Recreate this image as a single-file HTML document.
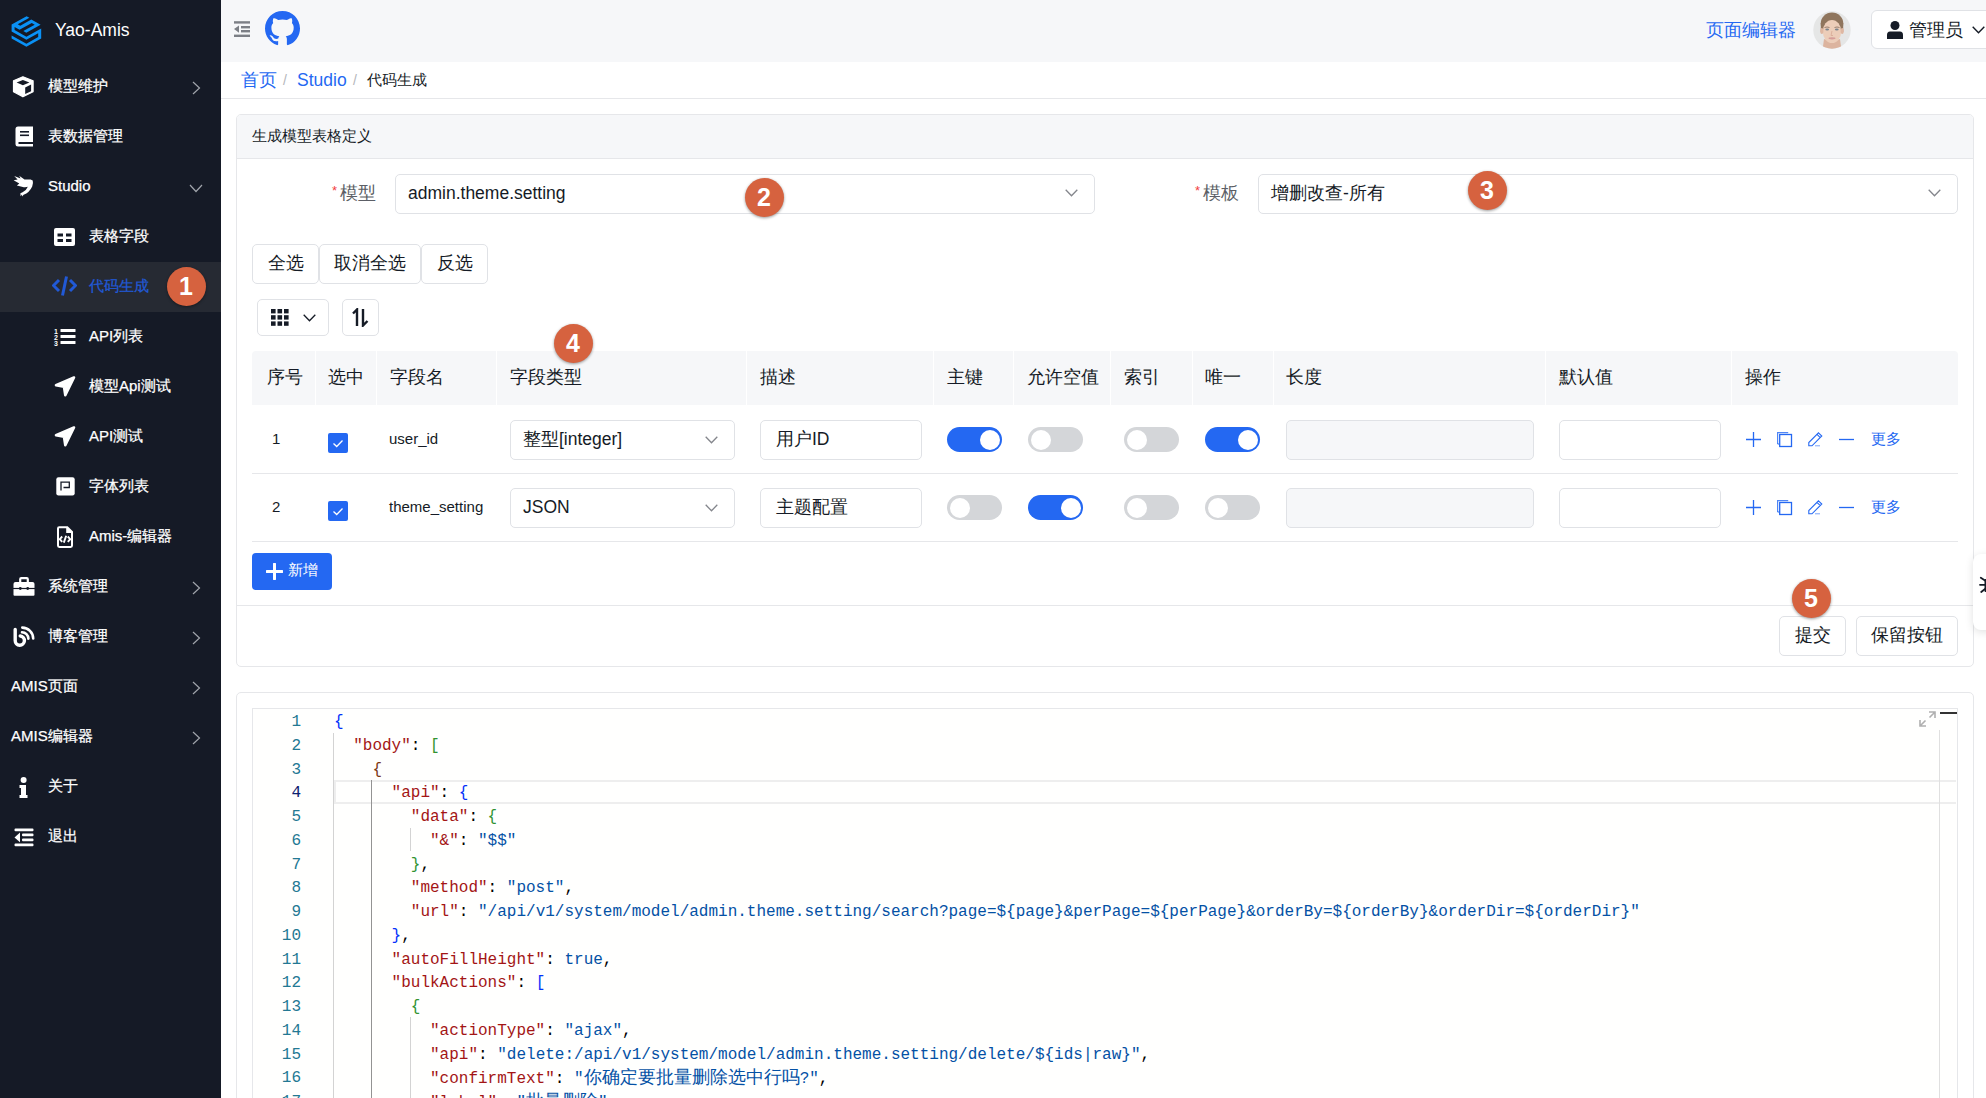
<!DOCTYPE html><html><head><meta charset="utf-8"><style>
*{box-sizing:border-box;margin:0;padding:0}
html,body{width:1986px;height:1098px;overflow:hidden;background:#fff;font-family:"Liberation Sans",sans-serif;color:#151b26}
.a{position:absolute;white-space:nowrap}
svg{display:block}
#side{position:absolute;left:0;top:0;width:221px;height:1098px;background:#151a26}
.mt{position:absolute;color:#fff;font-size:15px;line-height:20px;white-space:nowrap;-webkit-text-stroke:0.25px currentColor}
.panel{position:absolute;border:1px solid #e6e7ea;border-radius:5px;background:#fff}
.btn{position:absolute;border:1px solid #e0e2e6;border-radius:5px;background:#fff;font-size:17.5px;line-height:37px;color:#151b26;text-align:center;white-space:nowrap}
.badge{position:absolute;width:40px;height:40px;border-radius:50%;background:#d6623f;color:#fff;font-weight:bold;font-size:25px;text-align:center;line-height:40px;box-shadow:0 1px 3px rgba(0,0,0,.4)}
.th{position:absolute;font-size:17.5px;line-height:22px;color:#151b26;white-space:nowrap}
.inp{position:absolute;border:1px solid #e0e2e6;border-radius:5px;background:#fff;font-size:17.5px;line-height:22px;white-space:nowrap}
.sw{position:absolute;width:55px;height:25px;border-radius:13px;background:#d4d6d9}
.sw::after{content:"";position:absolute;top:2.5px;left:2.5px;width:20px;height:20px;border-radius:50%;background:#fff}
.sw.on{background:#2468f2}
.sw.on::after{left:32.5px}
.cb{position:absolute;width:20px;height:20px;border-radius:2px;background:#2468f2}
.ln{position:absolute;left:253px;width:48px;text-align:right;font-family:"Liberation Mono",monospace;font-size:16px;color:#237893;line-height:23.73px;height:23.73px}
.cl{position:absolute;left:334px;line-height:23.73px;height:23.73px;font-family:"Liberation Mono",monospace;font-size:16px;white-space:pre;color:#000}
.k{color:#a31515}.s{color:#0451a5}.b1{color:#0431fa}.b2{color:#319331}.b3{color:#7b3814}
.ig{position:absolute;width:1px;background:#d3d3d3}
</style></head><body>
<div id="side">
<svg class="a" style="left:0;top:0" width="50" height="50" viewBox="0 0 50 50"><path d="M26.60 16.15 L29.37 17.70 L17.71 24.23 L20.26 25.65 L31.31 19.46 L40.60 24.66 L26.27 32.68 L23.32 31.03 L34.71 24.66 L31.76 23.01 L19.53 29.86 L14.60 27.10 L14.60 30.09 L26.40 36.70 L41.20 28.41 L41.20 38.51 L26.40 46.80 L11.60 38.51 L11.60 35.41 L26.40 43.70 L38.20 37.09 L38.20 33.19 L26.40 39.80 L11.60 31.51 L11.60 24.55Z" fill="#0a91f5"/></svg>
<div class="a" style="left:55px;top:17px;font-size:17.5px;line-height:26px;color:#fff">Yao-Amis</div>
<div class="mt" style="left:48px;top:75.5px;color:#fff">模型维护</div>
<div class="a" style="left:0;top:85.5px;width:0;height:0"><svg class="a" style="left:12px;top:-11px" width="23" height="24" viewBox="0 0 23 24"><path d="M10.9 1.8 L21.1 5.7 V16.8 L10.9 21.8 L1.5 16.8 V5.7 Z" fill="#fff" stroke="#fff" stroke-width="1.2" stroke-linejoin="round"/><path d="M4.6 7.6 L10.9 5.1 L17.4 7.6 L10.9 10.2 Z" fill="#151a26"/><path d="M13.2 12.4 L19.1 9.6 V16.2 L13.2 19 Z" fill="#151a26"/></svg></div>
<svg class="a" style="left:192px;top:81px" width="9" height="14" viewBox="0 0 9 14"><path d="M1 1 L7.5 7 L1 13" fill="none" stroke="#a0a4ab" stroke-width="1.2"/></svg>
<div class="mt" style="left:48px;top:125.5px;color:#fff">表数据管理</div>
<div class="a" style="left:0;top:135.5px;width:0;height:0"><svg class="a" style="left:15px;top:-10px" width="19" height="21" viewBox="0 0 19 21"><path d="M3 0.5 H18 V20.5 H3 Q0.5 20.5 0.5 18 V3 Q0.5 0.5 3 0.5Z" fill="#fff"/><rect x="5" y="5" width="9" height="1.6" fill="#151a26"/><rect x="5" y="8.5" width="9" height="1.6" fill="#151a26"/><rect x="3.5" y="16" width="14.5" height="2" fill="#151a26"/></svg></div>
<div class="mt" style="left:48px;top:175.5px;color:#fff">Studio</div>
<div class="a" style="left:0;top:185.5px;width:0;height:0"><svg class="a" style="left:10px;top:-14.5px" width="25" height="28" viewBox="10 171 25 28"><path d="M30.6 179.6 Q27 179.3 24.5 179.6 L19.2 175.8 L20.6 178.6 L14.2 175.9 L17.6 179.4 L13.6 180.3 L19.3 183.6 L16.9 185.6 L23.8 187.2 Q26.5 187.4 27.8 186.8 Q26.6 190.2 22.6 192.3 L20.4 193.2 L20.6 196.3 L22 194.6 L22.2 196.6 L23.6 194.8 Q29.5 192.5 32.2 186.5 Q33.5 183 32.7 180.6 Z" fill="#fff"/></svg></div>
<svg class="a" style="left:189px;top:184px" width="14" height="9" viewBox="0 0 14 9"><path d="M1 1 L7 7.5 L13 1" fill="none" stroke="#a0a4ab" stroke-width="1.2"/></svg>
<div class="mt" style="left:89px;top:225.5px;color:#fff">表格字段</div>
<div class="a" style="left:0;top:235.5px;width:0;height:0"><svg class="a" style="left:54px;top:-8px" width="21" height="18" viewBox="0 0 21 18"><rect x="0" y="0" width="21" height="18" rx="2" fill="#fff"/><rect x="3.5" y="5.5" width="5.5" height="3" fill="#151a26"/><rect x="12" y="5.5" width="5.5" height="3" fill="#151a26"/><rect x="3.5" y="11" width="5.5" height="3" fill="#151a26"/><rect x="12" y="11" width="5.5" height="3" fill="#151a26"/></svg></div>
<div class="a" style="left:0;top:262px;width:221px;height:50px;background:#262a33"></div>
<div class="mt" style="left:89px;top:275.5px;color:#2159d6">代码生成</div>
<div class="a" style="left:0;top:285.5px;width:0;height:0"><svg class="a" style="left:52px;top:-10px" width="25" height="20" viewBox="0 0 25 20"><path d="M7 4 L1.5 9.5 L7 15" fill="none" stroke="#2159d6" stroke-width="3"/><path d="M18 4 L23.5 9.5 L18 15" fill="none" stroke="#2159d6" stroke-width="3"/><path d="M14.5 0.5 L10.5 19.5" fill="none" stroke="#2159d6" stroke-width="3"/></svg></div>
<div class="mt" style="left:89px;top:325.5px;color:#fff">API列表</div>
<div class="a" style="left:0;top:335.5px;width:0;height:0"><svg class="a" style="left:53px;top:-9px" width="23" height="20" viewBox="0 0 23 20"><rect x="7.5" y="2" width="15" height="3" rx="0.5" fill="#fff"/><rect x="7.5" y="8" width="15" height="3" rx="0.5" fill="#fff"/><rect x="7.5" y="14" width="15" height="3" rx="0.5" fill="#fff"/><text x="1" y="6.5" font-size="7" font-weight="bold" fill="#fff" font-family="Liberation Sans">1</text><text x="1" y="12.5" font-size="7" font-weight="bold" fill="#fff" font-family="Liberation Sans">2</text><text x="1" y="18.5" font-size="7" font-weight="bold" fill="#fff" font-family="Liberation Sans">3</text></svg></div>
<div class="mt" style="left:89px;top:375.5px;color:#fff">模型Api测试</div>
<div class="a" style="left:0;top:385.5px;width:0;height:0"><svg class="a" style="left:54px;top:-10px" width="22" height="21" viewBox="0 0 22 21"><path d="M20 1.5 L2 9.3 L10 10.8 L11.3 19.3 Z" fill="#fff" stroke="#fff" stroke-width="2.6" stroke-linejoin="round"/></svg></div>
<div class="mt" style="left:89px;top:425.5px;color:#fff">API测试</div>
<div class="a" style="left:0;top:435.5px;width:0;height:0"><svg class="a" style="left:54px;top:-10px" width="22" height="21" viewBox="0 0 22 21"><path d="M20 1.5 L2 9.3 L10 10.8 L11.3 19.3 Z" fill="#fff" stroke="#fff" stroke-width="2.6" stroke-linejoin="round"/></svg></div>
<div class="mt" style="left:89px;top:475.5px;color:#fff">字体列表</div>
<div class="a" style="left:0;top:485.5px;width:0;height:0"><svg class="a" style="left:55.5px;top:-8.5px" width="19" height="19" viewBox="0 0 19 19"><rect x="0.3" y="0.3" width="18.4" height="18.2" rx="2.2" fill="#fff"/><path d="M5 13.5 V5.2 H13.3 V10.5 H7.5" fill="none" stroke="#151a26" stroke-width="1.3"/></svg></div>
<div class="mt" style="left:89px;top:525.5px;color:#fff">Amis-编辑器</div>
<div class="a" style="left:0;top:535.5px;width:0;height:0"><svg class="a" style="left:57px;top:-10px" width="16" height="22" viewBox="0 0 16 22"><path d="M2.2 1.2 H10.3 L15 5.9 V19.6 Q15 20.9 13.7 20.9 H2.3 Q1 20.9 1 19.6 V2.5 Q1 1.2 2.2 1.2Z" fill="none" stroke="#fff" stroke-width="2"/><path d="M10 1 V6.3 H15.2" fill="#fff" stroke="#fff" stroke-width="1.6"/><path d="M5.2 10.5 L2.8 13.2 L5.2 15.9 M10.8 10.5 L13.2 13.2 L10.8 15.9 M9.2 9.8 L6.8 16.6" fill="none" stroke="#fff" stroke-width="1.9"/></svg></div>
<div class="mt" style="left:48px;top:575.5px;color:#fff">系统管理</div>
<div class="a" style="left:0;top:585.5px;width:0;height:0"><svg class="a" style="left:13px;top:-9px" width="22" height="20" viewBox="0 0 22 20"><path d="M7.2 6 V2.3 Q7.2 1.2 8.3 1.2 H13.7 Q14.8 1.2 14.8 2.3 V6" fill="none" stroke="#fff" stroke-width="2.2"/><path d="M2.5 5 H19.5 Q21.5 5 21.5 7 V17.8 Q21.5 18.8 20.5 18.8 H1.5 Q0.5 18.8 0.5 17.8 V7 Q0.5 5 2.5 5Z" fill="#fff"/><rect x="0" y="10.9" width="22" height="1.2" fill="#151a26"/><circle cx="7.3" cy="11.5" r="1.4" fill="#151a26"/><circle cx="14.7" cy="11.5" r="1.4" fill="#151a26"/></svg></div>
<svg class="a" style="left:192px;top:581px" width="9" height="14" viewBox="0 0 9 14"><path d="M1 1 L7.5 7 L1 13" fill="none" stroke="#a0a4ab" stroke-width="1.2"/></svg>
<div class="mt" style="left:48px;top:625.5px;color:#fff">博客管理</div>
<div class="a" style="left:0;top:635.5px;width:0;height:0"><svg class="a" style="left:13px;top:-10px" width="22" height="22" viewBox="0 0 22 22"><path d="M2.2 3.5 V14.5 A4.6 4.6 0 1 0 7.2 10" fill="none" stroke="#fff" stroke-width="3.4" stroke-linecap="round"/><path d="M9.3 1.6 A11 11 0 0 1 20.2 12.5" fill="none" stroke="#fff" stroke-width="2.6" stroke-linecap="round"/><path d="M9 6.2 A6.6 6.6 0 0 1 15.4 12.6" fill="none" stroke="#fff" stroke-width="2.6" stroke-linecap="round"/></svg></div>
<svg class="a" style="left:192px;top:631px" width="9" height="14" viewBox="0 0 9 14"><path d="M1 1 L7.5 7 L1 13" fill="none" stroke="#a0a4ab" stroke-width="1.2"/></svg>
<div class="mt" style="left:11px;top:675.5px;color:#fff">AMIS页面</div>
<svg class="a" style="left:192px;top:681px" width="9" height="14" viewBox="0 0 9 14"><path d="M1 1 L7.5 7 L1 13" fill="none" stroke="#a0a4ab" stroke-width="1.2"/></svg>
<div class="mt" style="left:11px;top:725.5px;color:#fff">AMIS编辑器</div>
<svg class="a" style="left:192px;top:731px" width="9" height="14" viewBox="0 0 9 14"><path d="M1 1 L7.5 7 L1 13" fill="none" stroke="#a0a4ab" stroke-width="1.2"/></svg>
<div class="mt" style="left:48px;top:775.5px;color:#fff">关于</div>
<div class="a" style="left:0;top:785.5px;width:0;height:0"><svg class="a" style="left:19px;top:-9px" width="10" height="22" viewBox="0 0 10 22"><circle cx="4.6" cy="3" r="3" fill="#fff"/><path d="M0.5 8 H7 V18 H8.5 V21 H0.5 V18 H2 V11 H0.5Z" fill="#fff"/></svg></div>
<div class="mt" style="left:48px;top:825.5px;color:#fff">退出</div>
<div class="a" style="left:0;top:835.5px;width:0;height:0"><svg class="a" style="left:14px;top:-8px" width="20" height="19" viewBox="0 0 20 19"><rect x="0.5" y="0.5" width="19" height="2.8" rx="1" fill="#fff"/><rect x="8" y="5.5" width="11.5" height="2.8" rx="1" fill="#fff"/><rect x="8" y="10.5" width="11.5" height="2.8" rx="1" fill="#fff"/><rect x="0.5" y="15.5" width="19" height="2.8" rx="1" fill="#fff"/><path d="M6 4.5 L0.5 9.4 L6 14.3Z" fill="#fff"/></svg></div>
</div>
<div class="a" style="left:221px;top:0;width:1765px;height:62px;background:#f6f7f9"></div>
<svg class="a" style="left:234px;top:21px" width="16" height="16" viewBox="0 0 16 16"><rect x="0" y="0.2" width="16" height="2.4" fill="#7c7f86"/><rect x="7" y="5" width="9" height="2.4" fill="#7c7f86"/><rect x="7" y="9" width="9" height="2.4" fill="#7c7f86"/><rect x="0" y="13.6" width="16" height="2.4" fill="#7c7f86"/><path d="M5 4.5 L0 8.1 L5 11.7Z" fill="#7c7f86"/></svg>
<svg class="a" style="left:265px;top:11px" width="35" height="35" viewBox="0 0 16 16"><path fill="#2468f2" d="M8 0C3.58 0 0 3.58 0 8c0 3.54 2.29 6.53 5.47 7.59.4.07.55-.17.55-.38 0-.19-.01-.82-.01-1.490-2.01.37-2.53-.49-2.69-.94-.09-.23-.48-.94-.82-1.13-.28-.15-.68-.52-.01-.53.63-.01 1.08.58 1.23.82.72 1.21 1.87.87 2.33.66.07-.52.28-.87.51-1.07-1.78-.2-3.64-.89-3.64-3.95 0-.87.31-1.59.82-2.150-.08-.2-.36-1.02.08-2.12 0 0 .67-.21 2.2.82.64-.18 1.32-.27 2-.27.68 0 1.36.09 2 .27 1.53-1.04 2.2-.82 2.2-.82.44 1.1.16 1.92.08 2.12.51.56.82 1.27.82 2.15 0 3.07-1.87 3.75-3.65 3.95.29.25.54.73.54 1.48 0 1.07-.01 1.93-.01 2.2 0 .21.15.46.55.38A8.013 8.013 0 0016 8c0-4.42-3.58-8-8-8z"/></svg>
<div class="a" style="left:1706px;top:18px;font-size:17.5px;line-height:24px;color:#2468f2">页面编辑器</div>
<svg class="a" style="left:1813px;top:11px" width="38" height="38" viewBox="0 0 38 38">
<defs><clipPath id="av"><circle cx="19" cy="19" r="18.7"/></clipPath>
<filter id="bl" x="-20%" y="-20%" width="140%" height="140%"><feGaussianBlur stdDeviation="0.7"/></filter></defs>
<g clip-path="url(#av)"><rect width="38" height="38" fill="#e5e6e6"/>
<g filter="url(#bl)">
<path d="M9.5 39 L11 28 Q19 31 27 28 L28.5 39 Z" fill="#dcb49f"/>
<ellipse cx="19" cy="12.5" rx="11.3" ry="11" fill="#8f745d"/>
<rect x="7.8" y="12" width="3.5" height="9" fill="#8f745d"/>
<rect x="26.7" y="12" width="3.5" height="9" fill="#8f745d"/>
<ellipse cx="19" cy="20.5" rx="9.2" ry="11.5" fill="#eccdb9"/>
<ellipse cx="8.8" cy="20" rx="1.6" ry="3" fill="#dfb7a2"/>
<ellipse cx="29.2" cy="20" rx="1.6" ry="3" fill="#dfb7a2"/>
<path d="M11.5 16.5 Q14 15.5 16.5 16.5 M21.5 16.5 Q24 15.5 26.5 16.5" stroke="#9a8070" stroke-width="1" fill="none"/>
<ellipse cx="14.2" cy="18.5" rx="1.9" ry="0.9" fill="#7a848d"/>
<ellipse cx="23.8" cy="18.5" rx="1.9" ry="0.9" fill="#7a848d"/>
<ellipse cx="19" cy="27.3" rx="3.5" ry="1.1" fill="#d59d98"/>
<path d="M19 20 L18 24.5 H20" stroke="#d9ad98" stroke-width="0.9" fill="none"/>
</g></g></svg>
<div class="a" style="left:1871px;top:10px;width:140px;height:39px;background:#fff;border:1px solid #e0e2e6;border-radius:6px"></div>
<svg class="a" style="left:1887px;top:21px" width="16" height="18" viewBox="0 0 16 18"><circle cx="8" cy="4.5" r="4.5" fill="#151b26"/><path d="M3 10.5 H13 Q16 10.5 16 14 V18 H0 V14 Q0 10.5 3 10.5Z" fill="#151b26"/></svg>
<div class="a" style="left:1909px;top:18px;font-size:17.5px;line-height:24px;color:#151b26">管理员</div>
<svg class="a" style="left:1972px;top:26px" width="13" height="8" viewBox="0 0 13 8"><path d="M0.7 0.7 L6.5 6.8 L12.3 0.7" fill="none" stroke="#151b26" stroke-width="1.4"/></svg>
<div class="a" style="left:221px;top:98px;width:1765px;height:1px;background:#e6e7ea"></div>
<div class="a" style="left:241px;top:68px;font-size:17.5px;line-height:24px;color:#2468f2">首页</div>
<div class="a" style="left:283px;top:70px;font-size:14px;line-height:20px;color:#b4b6ba">/</div>
<div class="a" style="left:297px;top:68px;font-size:17.5px;line-height:24px;color:#2468f2">Studio</div>
<div class="a" style="left:353px;top:70px;font-size:14px;line-height:20px;color:#b4b6ba">/</div>
<div class="a" style="left:367px;top:70px;font-size:15px;line-height:20px;color:#151b26">代码生成</div>
<div class="panel" style="left:236px;top:114px;width:1738px;height:553px;overflow:hidden"><div class="a" style="left:0;top:0;width:1736px;height:44px;background:#f6f7f9;border-bottom:1px solid #e6e7ea"></div></div>
<div class="a" style="left:252px;top:125px;font-size:15px;line-height:22px;color:#151b26">生成模型表格定义</div>
<div class="a" style="left:332px;top:183px;font-size:13px;line-height:16px;color:#f23d3d">*</div>
<div class="a" style="left:340px;top:181px;font-size:17.5px;line-height:24px;color:#5c5f66">模型</div>
<div class="inp" style="left:395px;top:174px;width:700px;height:40px"></div>
<div class="a" style="left:408px;top:181px;font-size:17.5px;line-height:24px;color:#151b26">admin.theme.setting</div>
<svg class="a" style="left:1065px;top:189px" width="13" height="8" viewBox="0 0 13 8"><path d="M0.7 0.7 L6.5 6.8 L12.3 0.7" fill="none" stroke="#84868c" stroke-width="1.3"/></svg>
<div class="a" style="left:1195px;top:183px;font-size:13px;line-height:16px;color:#f23d3d">*</div>
<div class="a" style="left:1203px;top:181px;font-size:17.5px;line-height:24px;color:#5c5f66">模板</div>
<div class="inp" style="left:1258px;top:174px;width:700px;height:40px"></div>
<div class="a" style="left:1271px;top:181px;font-size:17.5px;line-height:24px;color:#151b26">增删改查-所有</div>
<svg class="a" style="left:1928px;top:189px" width="13" height="8" viewBox="0 0 13 8"><path d="M0.7 0.7 L6.5 6.8 L12.3 0.7" fill="none" stroke="#84868c" stroke-width="1.3"/></svg>
<div class="btn" style="left:252px;top:244px;width:67px;height:40px">全选</div>
<div class="btn" style="left:319px;top:244px;width:102px;height:40px">取消全选</div>
<div class="btn" style="left:421px;top:244px;width:67px;height:40px">反选</div>
<div class="btn" style="left:257px;top:299px;width:72px;height:37px"></div>
<svg class="a" style="left:271px;top:309px" width="18" height="17" viewBox="0 0 18 17"><rect x="0.0" y="0.0" width="4.6" height="4.4" fill="#151b26"/><rect x="6.5" y="0.0" width="4.6" height="4.4" fill="#151b26"/><rect x="13.0" y="0.0" width="4.6" height="4.4" fill="#151b26"/><rect x="0.0" y="6.2" width="4.6" height="4.4" fill="#151b26"/><rect x="6.5" y="6.2" width="4.6" height="4.4" fill="#151b26"/><rect x="13.0" y="6.2" width="4.6" height="4.4" fill="#151b26"/><rect x="0.0" y="12.4" width="4.6" height="4.4" fill="#151b26"/><rect x="6.5" y="12.4" width="4.6" height="4.4" fill="#151b26"/><rect x="13.0" y="12.4" width="4.6" height="4.4" fill="#151b26"/></svg>
<svg class="a" style="left:303px;top:314px" width="13" height="8" viewBox="0 0 13 8"><path d="M0.7 0.7 L6.5 6.8 L12.3 0.7" fill="none" stroke="#151b26" stroke-width="1.3"/></svg>
<div class="btn" style="left:342px;top:299px;width:37px;height:37px"></div>
<svg class="a" style="left:352px;top:308px" width="17" height="19" viewBox="0 0 17 19"><path d="M5 18 V1.5 L1 5.5" fill="none" stroke="#151b26" stroke-width="2.4" stroke-linejoin="miter"/><path d="M11 1 V17.5 L15.5 13" fill="none" stroke="#151b26" stroke-width="2.4"/></svg>
<div class="a" style="left:252px;top:351px;width:1706px;height:54px;background:#f6f7f9;border-radius:4px 4px 0 0"></div>
<div class="a" style="left:315px;top:351px;width:1.3px;height:54px;background:#fff"></div>
<div class="a" style="left:376px;top:351px;width:1.3px;height:54px;background:#fff"></div>
<div class="a" style="left:496px;top:351px;width:1.3px;height:54px;background:#fff"></div>
<div class="a" style="left:746px;top:351px;width:1.3px;height:54px;background:#fff"></div>
<div class="a" style="left:933px;top:351px;width:1.3px;height:54px;background:#fff"></div>
<div class="a" style="left:1013px;top:351px;width:1.3px;height:54px;background:#fff"></div>
<div class="a" style="left:1110px;top:351px;width:1.3px;height:54px;background:#fff"></div>
<div class="a" style="left:1192px;top:351px;width:1.3px;height:54px;background:#fff"></div>
<div class="a" style="left:1273px;top:351px;width:1.3px;height:54px;background:#fff"></div>
<div class="a" style="left:1545px;top:351px;width:1.3px;height:54px;background:#fff"></div>
<div class="a" style="left:1731px;top:351px;width:1.3px;height:54px;background:#fff"></div>
<div class="th" style="left:267px;top:366px">序号</div>
<div class="th" style="left:328px;top:366px">选中</div>
<div class="th" style="left:390px;top:366px">字段名</div>
<div class="th" style="left:510px;top:366px">字段类型</div>
<div class="th" style="left:760px;top:366px">描述</div>
<div class="th" style="left:947px;top:366px">主键</div>
<div class="th" style="left:1027px;top:366px">允许空值</div>
<div class="th" style="left:1124px;top:366px">索引</div>
<div class="th" style="left:1205px;top:366px">唯一</div>
<div class="th" style="left:1286px;top:366px">长度</div>
<div class="th" style="left:1559px;top:366px">默认值</div>
<div class="th" style="left:1745px;top:366px">操作</div>
<div class="a" style="left:252px;top:473px;width:1706px;height:1px;background:#e6e7ea"></div>
<div class="a" style="left:272px;top:429px;font-size:15px;line-height:20px;color:#151b26">1</div>
<div class="cb" style="left:328px;top:433px"><svg width="20" height="20" viewBox="0 0 20 20"><path d="M5.5 10.5 L8.7 13.5 L14.5 7.5" fill="none" stroke="#fff" stroke-width="1.3"/></svg></div>
<div class="a" style="left:389px;top:429px;font-size:15px;line-height:20px;color:#151b26">user_id</div>
<div class="inp" style="left:510px;top:420px;width:225px;height:40px"></div>
<div class="a" style="left:523px;top:427px;font-size:17.5px;line-height:24px;color:#151b26">整型[integer]</div>
<svg class="a" style="left:705px;top:436px" width="13" height="8" viewBox="0 0 13 8"><path d="M0.7 0.7 L6.5 6.8 L12.3 0.7" fill="none" stroke="#84868c" stroke-width="1.3"/></svg>
<div class="inp" style="left:760px;top:420px;width:162px;height:40px"></div>
<div class="a" style="left:776px;top:427px;font-size:17.5px;line-height:24px;color:#151b26">用户ID</div>
<div class="sw on" style="left:947px;top:427px"></div>
<div class="sw" style="left:1028px;top:427px"></div>
<div class="sw" style="left:1124px;top:427px"></div>
<div class="sw on" style="left:1205px;top:427px"></div>
<div class="inp" style="left:1286px;top:420px;width:248px;height:40px;background:#f6f7f9"></div>
<div class="inp" style="left:1559px;top:420px;width:162px;height:40px"></div>
<svg class="a" style="left:1745px;top:431px" width="17" height="17" viewBox="0 0 17 17"><path d="M8.5 1 V16 M1 8.5 H16" stroke="#2468f2" stroke-width="1.3"/></svg>
<svg class="a" style="left:1776px;top:431px" width="17" height="17" viewBox="0 0 17 17"><path d="M1.6 13 V1.6 H12.2" fill="none" stroke="#2468f2" stroke-width="1.2" opacity=".8"/><path d="M1.6 13 H3" stroke="#2468f2" stroke-width="1.2"/><rect x="3.7" y="3.5" width="11.8" height="12" fill="none" stroke="#2468f2" stroke-width="1.3"/></svg>
<svg class="a" style="left:1807px;top:431px" width="17" height="17" viewBox="0 0 17 17"><path d="M11.5 1.8 L14.8 5 L5 14.8 H1.8 V11.5 Z M10 3.3 L13.3 6.6" fill="none" stroke="#2468f2" stroke-width="1.1"/><path d="M8 14.8 H13" stroke="#2468f2" stroke-width="1" opacity=".6"/></svg>
<svg class="a" style="left:1838px;top:431px" width="17" height="17" viewBox="0 0 17 17"><path d="M1 8.5 H16" stroke="#2468f2" stroke-width="1.3"/></svg>
<div class="a" style="left:1871px;top:429px;font-size:15px;line-height:20px;color:#2468f2">更多</div>
<div class="a" style="left:252px;top:541px;width:1706px;height:1px;background:#e6e7ea"></div>
<div class="a" style="left:272px;top:497px;font-size:15px;line-height:20px;color:#151b26">2</div>
<div class="cb" style="left:328px;top:501px"><svg width="20" height="20" viewBox="0 0 20 20"><path d="M5.5 10.5 L8.7 13.5 L14.5 7.5" fill="none" stroke="#fff" stroke-width="1.3"/></svg></div>
<div class="a" style="left:389px;top:497px;font-size:15px;line-height:20px;color:#151b26">theme_setting</div>
<div class="inp" style="left:510px;top:488px;width:225px;height:40px"></div>
<div class="a" style="left:523px;top:495px;font-size:17.5px;line-height:24px;color:#151b26">JSON</div>
<svg class="a" style="left:705px;top:504px" width="13" height="8" viewBox="0 0 13 8"><path d="M0.7 0.7 L6.5 6.8 L12.3 0.7" fill="none" stroke="#84868c" stroke-width="1.3"/></svg>
<div class="inp" style="left:760px;top:488px;width:162px;height:40px"></div>
<div class="a" style="left:776px;top:495px;font-size:17.5px;line-height:24px;color:#151b26">主题配置</div>
<div class="sw" style="left:947px;top:495px"></div>
<div class="sw on" style="left:1028px;top:495px"></div>
<div class="sw" style="left:1124px;top:495px"></div>
<div class="sw" style="left:1205px;top:495px"></div>
<div class="inp" style="left:1286px;top:488px;width:248px;height:40px;background:#f6f7f9"></div>
<div class="inp" style="left:1559px;top:488px;width:162px;height:40px"></div>
<svg class="a" style="left:1745px;top:499px" width="17" height="17" viewBox="0 0 17 17"><path d="M8.5 1 V16 M1 8.5 H16" stroke="#2468f2" stroke-width="1.3"/></svg>
<svg class="a" style="left:1776px;top:499px" width="17" height="17" viewBox="0 0 17 17"><path d="M1.6 13 V1.6 H12.2" fill="none" stroke="#2468f2" stroke-width="1.2" opacity=".8"/><path d="M1.6 13 H3" stroke="#2468f2" stroke-width="1.2"/><rect x="3.7" y="3.5" width="11.8" height="12" fill="none" stroke="#2468f2" stroke-width="1.3"/></svg>
<svg class="a" style="left:1807px;top:499px" width="17" height="17" viewBox="0 0 17 17"><path d="M11.5 1.8 L14.8 5 L5 14.8 H1.8 V11.5 Z M10 3.3 L13.3 6.6" fill="none" stroke="#2468f2" stroke-width="1.1"/><path d="M8 14.8 H13" stroke="#2468f2" stroke-width="1" opacity=".6"/></svg>
<svg class="a" style="left:1838px;top:499px" width="17" height="17" viewBox="0 0 17 17"><path d="M1 8.5 H16" stroke="#2468f2" stroke-width="1.3"/></svg>
<div class="a" style="left:1871px;top:497px;font-size:15px;line-height:20px;color:#2468f2">更多</div>
<div class="a" style="left:252px;top:553px;width:80px;height:37px;background:#2468f2;border-radius:4px"></div>
<svg class="a" style="left:266px;top:563px" width="17" height="17" viewBox="0 0 17 17"><path d="M8.5 1 V16 M1 8.5 H16" stroke="#fff" stroke-width="3" stroke-linecap="round"/></svg>
<div class="a" style="left:288px;top:560px;font-size:15px;line-height:20px;color:#fff">新增</div>
<div class="a" style="left:237px;top:605px;width:1736px;height:1px;background:#e6e7ea"></div>
<div class="btn" style="left:1779px;top:616px;width:67px;height:40px">提交</div>
<div class="btn" style="left:1856px;top:616px;width:102px;height:40px">保留按钮</div>
<div class="panel" style="left:236px;top:692px;width:1738px;height:460px"></div>
<div class="a" style="left:252px;top:708px;width:1706px;height:420px;border:1px solid #e6e7ea;background:#fffffe"></div>
<div class="a" style="left:334px;top:780.19px;width:1622px;height:23.73px;border:2px solid #eeeeee;border-right:none"></div>
<div class="ig" style="left:333.0px;top:732.73px;height:379.68px;background:#d3d3d3"></div>
<div class="ig" style="left:371.4px;top:780.19px;height:332.22px;background:#939393"></div>
<div class="ig" style="left:409.8px;top:827.65px;height:23.73px;background:#d3d3d3"></div>
<div class="ig" style="left:409.8px;top:1017.49px;height:94.92px;background:#d3d3d3"></div>
<div class="ln" style="top:711.30px;color:#237893">1</div>
<div class="cl" style="left:334.0px;top:711.30px"><span class="b1">{</span></div>
<div class="ln" style="top:735.03px;color:#237893">2</div>
<div class="cl" style="left:353.2px;top:735.03px"><span class="k">"body"</span>: <span class="b2">[</span></div>
<div class="ln" style="top:758.76px;color:#237893">3</div>
<div class="cl" style="left:372.4px;top:758.76px"><span class="b3">{</span></div>
<div class="ln" style="top:782.49px;color:#0b216f">4</div>
<div class="cl" style="left:391.6px;top:782.49px"><span class="k">"api"</span>: <span class="b1">{</span></div>
<div class="ln" style="top:806.22px;color:#237893">5</div>
<div class="cl" style="left:410.8px;top:806.22px"><span class="k">"data"</span>: <span class="b2">{</span></div>
<div class="ln" style="top:829.95px;color:#237893">6</div>
<div class="cl" style="left:430.0px;top:829.95px"><span class="k">"&amp;"</span>: <span class="s">"$$"</span></div>
<div class="ln" style="top:853.68px;color:#237893">7</div>
<div class="cl" style="left:410.8px;top:853.68px"><span class="b2">}</span>,</div>
<div class="ln" style="top:877.41px;color:#237893">8</div>
<div class="cl" style="left:410.8px;top:877.41px"><span class="k">"method"</span>: <span class="s">"post"</span>,</div>
<div class="ln" style="top:901.14px;color:#237893">9</div>
<div class="cl" style="left:410.8px;top:901.14px"><span class="k">"url"</span>: <span class="s">"/api/v1/system/model/admin.theme.setting/search?page=${page}&amp;perPage=${perPage}&amp;orderBy=${orderBy}&amp;orderDir=${orderDir}"</span></div>
<div class="ln" style="top:924.87px;color:#237893">10</div>
<div class="cl" style="left:391.6px;top:924.87px"><span class="b1">}</span>,</div>
<div class="ln" style="top:948.60px;color:#237893">11</div>
<div class="cl" style="left:391.6px;top:948.60px"><span class="k">"autoFillHeight"</span>: <span class="s">true</span>,</div>
<div class="ln" style="top:972.33px;color:#237893">12</div>
<div class="cl" style="left:391.6px;top:972.33px"><span class="k">"bulkActions"</span>: <span class="b1">[</span></div>
<div class="ln" style="top:996.06px;color:#237893">13</div>
<div class="cl" style="left:410.8px;top:996.06px"><span class="b2">{</span></div>
<div class="ln" style="top:1019.79px;color:#237893">14</div>
<div class="cl" style="left:430.0px;top:1019.79px"><span class="k">"actionType"</span>: <span class="s">"ajax"</span>,</div>
<div class="ln" style="top:1043.52px;color:#237893">15</div>
<div class="cl" style="left:430.0px;top:1043.52px"><span class="k">"api"</span>: <span class="s">"delete:/api/v1/system/model/admin.theme.setting/delete/${ids|raw}"</span>,</div>
<div class="ln" style="top:1067.25px;color:#237893">16</div>
<div class="cl" style="left:430.0px;top:1067.25px"><span class="k">"confirmText"</span>: <span class="s">"<span style="font-size:17.5px">你确定要批量删除选中行吗</span>?"</span>,</div>
<div class="ln" style="top:1090.98px;color:#237893">17</div>
<div class="cl" style="left:430.0px;top:1090.98px"><span class="k">"label"</span>: <span class="s">"<span style="font-size:17.5px">批量删除</span>"</span>,</div>
<div class="a" style="left:1939px;top:730px;width:1px;height:400px;background:#e0e0e0"></div>
<div class="a" style="left:1940px;top:712px;width:17px;height:2px;background:#333"></div>
<svg class="a" style="left:1918px;top:710px" width="19" height="18" viewBox="0 0 19 18"><path d="M11 2 H17 V8 M17 2 L11.5 7.5 M8 16 H2 V10 M2 16 L7.5 10.5" fill="none" stroke="#b0b0b0" stroke-width="1.6"/></svg>
<div class="a" style="left:1973px;top:554px;width:40px;height:76px;background:#fff;border-radius:8px;box-shadow:0 2px 8px rgba(0,0,0,.12)"></div>
<svg class="a" style="left:1979px;top:575px" width="8" height="20" viewBox="0 0 8 20"><path d="M1.8 2.8 L6 5.5 M1 9.8 H6 M2.2 17 L6 14" stroke="#151b26" stroke-width="1.8" stroke-linecap="round" fill="none"/><rect x="5.5" y="4" width="3" height="13" rx="1" fill="#151b26"/></svg>
<div class="badge" style="left:166.5px;top:266.5px;width:39px;height:39px;line-height:39px">1</div>
<div class="badge" style="left:744.5px;top:177.5px;width:39px;height:39px;line-height:39px">2</div>
<div class="badge" style="left:1467.5px;top:170.5px;width:39px;height:39px;line-height:39px">3</div>
<div class="badge" style="left:553.5px;top:323.5px;width:39px;height:39px;line-height:39px">4</div>
<div class="badge" style="left:1791.5px;top:578.5px;width:39px;height:39px;line-height:39px">5</div>
</body></html>
